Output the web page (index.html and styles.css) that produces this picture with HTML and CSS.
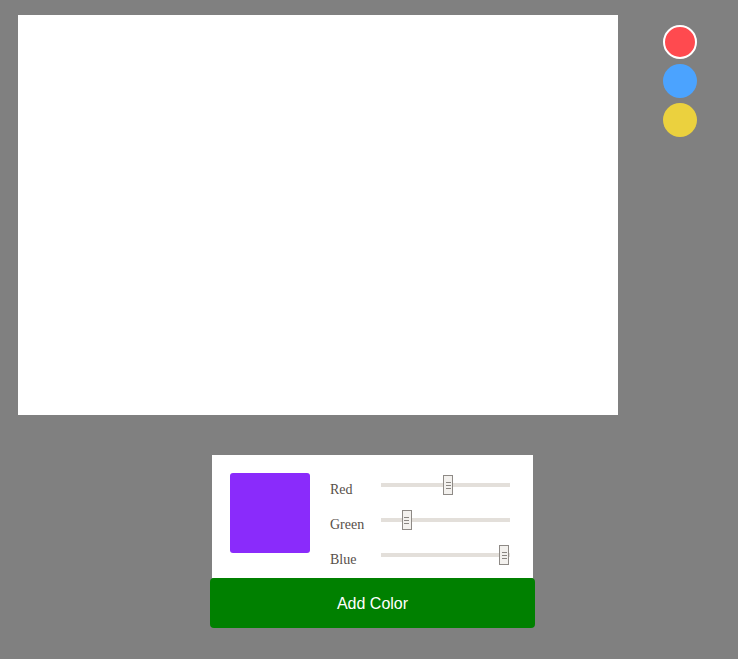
FILE: index.html
```html
<!DOCTYPE html>
<html>
<head>
<meta charset="utf-8">
<link rel="stylesheet" href="styles.css">
</head>
<body>
<div class="top">
  <div class="canvas"></div>
  <div class="palette">
    <div class="dot dot-red selected"></div>
    <div class="dot dot-blue"></div>
    <div class="dot dot-yellow"></div>
  </div>
</div>
<div class="editor">
  <div class="panel">
    <div class="swatch"></div>
    <div class="sliders">
      <div class="row"><label class="label">Red</label><input class="range" type="range" min="0" max="255" value="133"></div>
      <div class="row"><label class="label">Green</label><input class="range" type="range" min="0" max="255" value="45"></div>
      <div class="row"><label class="label">Blue</label><input class="range" type="range" min="0" max="255" value="253"></div>
    </div>
  </div>
  <button class="add">Add Color</button>
</div>
</body>
</html>
```
FILE: styles.css
```css
html, body {
  margin: 0;
  padding: 0;
}
body {
  background: #808080;
  width: 738px;
  height: 659px;
  overflow: hidden;
  padding: 15px 0 0 18px;
  box-sizing: border-box;
}
.top {
  display: flex;
  align-items: flex-start;
}
.canvas {
  width: 600px;
  height: 400px;
  background: #ffffff;
}
.palette {
  margin-left: 45px;
  margin-top: 10px;
  display: flex;
  flex-direction: column;
  gap: 5px;
}
.dot {
  width: 34px;
  height: 34px;
  border-radius: 50%;
  box-sizing: border-box;
}
.dot-red { background: #ff4a4f; }
.dot-blue { background: #4ba3ff; }
.dot-yellow { background: #ebd13e; }
.selected { border: 2px solid #ffffff; }

.editor {
  width: 325px;
  margin-top: 40px;
  margin-left: 192px;
}
.panel {
  margin: 0 2px;
  background: #ffffff;
  display: flex;
  padding: 18px 23px 0 18px;
}
.swatch {
  width: 80px;
  height: 80px;
  border-radius: 3px;
  background: #8a2bfb;
  flex: none;
}
.sliders {
  margin-left: 20px;
  display: flex;
  flex-direction: column;
}
.row {
  height: 35px;
  display: flex;
  align-items: flex-start;
}
.label {
  width: 51px;
  font-family: "Liberation Serif", "Times New Roman", serif;
  font-size: 14px;
  line-height: 20px;
  color: #574f4a;
  margin-top: 7px;
}
.range {
  -webkit-appearance: none;
  appearance: none;
  width: 129px;
  height: 20px;
  margin: 2px 0 0 0;
  padding: 0;
  background: transparent;
}
.range::-webkit-slider-runnable-track {
  height: 4px;
  background: #e3dfda;
  border: none;
}
.range::-webkit-slider-thumb {
  -webkit-appearance: none;
  appearance: none;
  width: 10px;
  height: 20px;
  margin-top: -8px;
  box-sizing: border-box;
  border: 1px solid #8e8a86;
  background:
    linear-gradient(#8a8682, #8a8682) center calc(50% - 3px) / 5px 1px no-repeat,
    linear-gradient(#8a8682, #8a8682) center center / 5px 1px no-repeat,
    linear-gradient(#8a8682, #8a8682) center calc(50% + 3px) / 5px 1px no-repeat,
    #f3f1ee;
}
.add {
  display: block;
  width: 325px;
  height: 50px;
  border: none;
  border-radius: 4px;
  background: #008000;
  color: #ffffff;
  font-family: "Liberation Sans", Arial, sans-serif;
  font-size: 16px;
  padding: 2px 0 0 0;
  margin: 0;
}
```
